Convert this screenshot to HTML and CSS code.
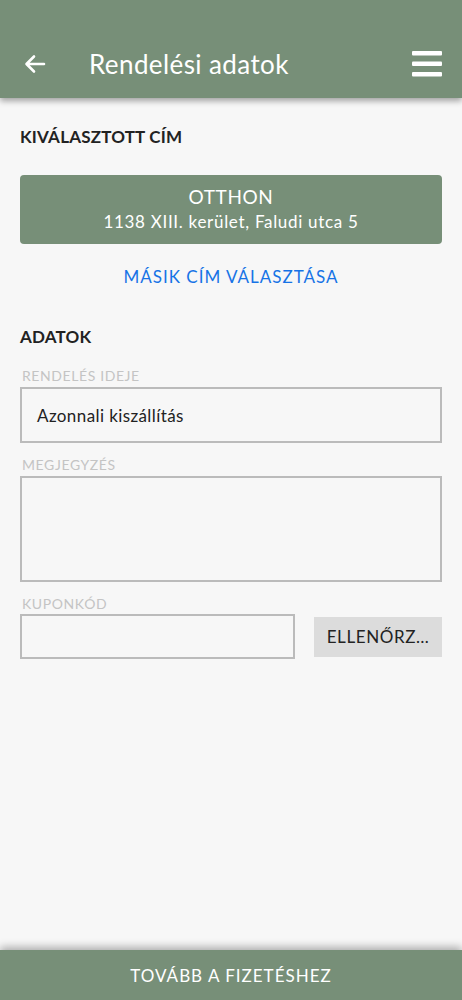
FILE: index.html
```html
<!DOCTYPE html>
<html lang="hu">
<head>
    <meta charset="UTF-8">
    <meta name="viewport" content="width=device-width, initial-scale=1.0">
    <title>Rendelési adatok</title>
    <link rel="stylesheet" href="styles.css">
</head>
<body>
    <div class="page">
        <header class="topbar">
            <svg class="back" width="24" height="24" viewBox="0 0 24 24">
                <path d="M21 12H4M11 4.5L3.5 12L11 19.5" fill="none" stroke="#fff" stroke-width="2.6" stroke-linecap="round" stroke-linejoin="round"/>
            </svg>
            <h1>Rendelési adatok</h1>
            <svg class="menu" width="30" height="26" viewBox="0 0 30 26">
                <rect x="0" y="0" width="30" height="4.5" rx="1" fill="#fff"/>
                <rect x="0" y="10.5" width="30" height="4.5" rx="1" fill="#fff"/>
                <rect x="0" y="21" width="30" height="4.5" rx="1" fill="#fff"/>
            </svg>
        </header>

        <main class="content">
            <h2>KIVÁLASZTOTT CÍM</h2>
            <div class="address-card">
                <div class="address-name">OTTHON</div>
                <div class="address-line">1138 XIII. kerület, Faludi utca 5</div>
            </div>
            <a class="link" href="#">MÁSIK CÍM VÁLASZTÁSA</a>

            <h2 class="data-title">ADATOK</h2>
            <label class="field-label first">RENDELÉS IDEJE</label>
            <div class="input">Azonnali kiszállítás</div>

            <label class="field-label">MEGJEGYZÉS</label>
            <div class="input textarea"></div>

            <label class="field-label">KUPONKÓD</label>
            <div class="coupon-row">
                <div class="input coupon"></div>
                <button class="check">ELLENŐRZ…</button>
            </div>
        </main>

        <footer class="bottombar">TOVÁBB A FIZETÉSHEZ</footer>
    </div>
</body>
</html>
```

FILE: styles.css
```css
body {
    margin: 0;
    padding: 0;
    background-color: #f7f7f7;
    font-family: Lato, "Open Sans", sans-serif;
    color: #222;
}
.page {
    height: 1000px;
    display: flex;
    flex-direction: column;
}
.topbar {
    height: 98px;
    box-sizing: border-box;
    padding: 30px 20px 0 23px;
    background-color: #778f78;
    display: flex;
    align-items: center;
    box-shadow: 0 3px 6px rgba(0, 0, 0, 0.35);
    position: relative;
    z-index: 1;
}
.topbar h1 {
    margin: 0 0 0 42px;
    flex: 1;
    font-size: 26px;
    font-weight: 400;
    letter-spacing: 0.4px;
    color: #fff;
}
.content {
    flex: 1;
    padding: 29px 20px 0;
    display: flex;
    flex-direction: column;
}
.content h2 {
    margin: 0;
    font-size: 17px;
    font-weight: 700;
    line-height: 20px;
    letter-spacing: 0.2px;
}
.address-card {
    margin-top: 28px;
    height: 69px;
    border-radius: 4px;
    background-color: #778f78;
    color: #fff;
    text-align: center;
    padding-top: 10px;
    box-sizing: border-box;
}
.address-name {
    font-size: 19px;
    line-height: 24px;
    letter-spacing: 0.6px;
}
.address-line {
    font-size: 17px;
    line-height: 25px;
    letter-spacing: 0.7px;
}
.link {
    margin-top: 22px;
    align-self: center;
    color: #1673e6;
    font-size: 17px;
    letter-spacing: 1px;
    text-decoration: none;
}
.content .data-title {
    margin-top: 40px;
}
.field-label {
    margin-top: 14px;
    padding-left: 2px;
    font-size: 14px;
    line-height: 16px;
    letter-spacing: 0.6px;
    color: #c4c4c4;
}
.field-label.first {
    margin-top: 21px;
}
.input {
    margin-top: 3px;
    height: 56px;
    box-sizing: border-box;
    border: 2px solid #bbb;
    padding: 0 15px;
    display: flex;
    align-items: center;
    font-size: 17px;
    letter-spacing: 0.4px;
}
.textarea {
    height: 106px;
}
.coupon-row {
    margin-top: 2px;
    display: flex;
    align-items: center;
    gap: 19px;
}
.coupon {
    margin-top: 0;
    flex: 1;
    height: 45px;
}
.check {
    width: 128px;
    height: 40px;
    border: none;
    background-color: #dcdcdc;
    font-family: Lato, "Open Sans", sans-serif;
    font-size: 17px;
    letter-spacing: 0.6px;
    color: #222;
    padding: 0 8px;
    text-align: center;
}
.bottombar {
    height: 50px;
    background-color: #778f78;
    color: #fff;
    display: flex;
    align-items: center;
    justify-content: center;
    font-size: 17px;
    letter-spacing: 1px;
    box-shadow: 0 -3px 8px rgba(0, 0, 0, 0.3);
}
```
